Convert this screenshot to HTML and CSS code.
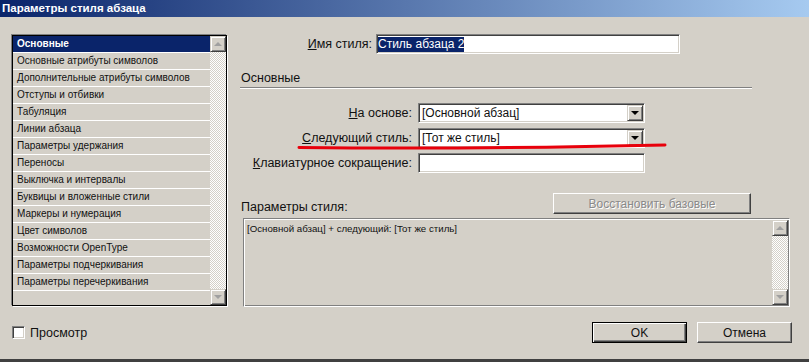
FILE: index.html
```html
<!doctype html>
<html>
  <head>
    <meta charset="utf-8" />
    <meta name="viewport" content="width=device-width, initial-scale=1" />
    <link rel="stylesheet" href="styles.css">
  </head>

  <body>
    <div class="dialog">
      <div class="titlebar">Параметры стиля абзаца</div>

      <div class="main">
        <div class="categories">
          <ul class="category-list">
            <li class="selected">Основные</li>
            <li>Основные атрибуты символов</li>
            <li>Дополнительные атрибуты символов</li>
            <li>Отступы и отбивки</li>
            <li>Табуляция</li>
            <li>Линии абзаца</li>
            <li>Параметры удержания</li>
            <li>Переносы</li>
            <li>Выключка и интервалы</li>
            <li>Буквицы и вложенные стили</li>
            <li>Маркеры и нумерация</li>
            <li>Цвет символов</li>
            <li>Возможности OpenType</li>
            <li>Параметры подчеркивания</li>
            <li>Параметры перечеркивания</li>
          </ul>
          <div class="scrollbar">
            <div class="scroll-btn up"></div>
            <div class="scroll-track"></div>
            <div class="scroll-btn down"></div>
          </div>
        </div>

        <div class="panel">
          <div class="field-row name-row">
            <label class="field-label"><u>И</u>мя стиля:</label>
            <div class="textbox name-box"><span class="selection">Стиль абзаца 2</span></div>
          </div>

          <div class="section-title">Основные</div>

          <div class="fields">
            <div class="field-row">
              <label class="field-label"><u>Н</u>а основе:</label>
              <div class="combo">
                <span>[Основной абзац]</span>
                <span class="combo-btn"></span>
              </div>
            </div>
            <div class="field-row">
              <label class="field-label"><u>С</u>ледующий стиль:</label>
              <div class="combo">
                <span>[Тот же стиль]</span>
                <span class="combo-btn"></span>
              </div>
            </div>
            <div class="field-row">
              <label class="field-label"><u>К</u>лавиатурное сокращение:</label>
              <div class="textbox"></div>
            </div>
          </div>

          <div class="summary-head">
            <span class="summary-label">Параметры стиля:</span>
            <button class="button reset" disabled>Восстановить базовые</button>
          </div>

          <div class="summary">
            <div class="summary-text">[Основной абзац] + следующий: [Тот же стиль]</div>
            <div class="scrollbar">
              <div class="scroll-btn up"></div>
              <div class="scroll-track"></div>
              <div class="scroll-btn down"></div>
            </div>
          </div>
        </div>
      </div>

      <div class="footer">
        <label class="preview"><span class="checkbox"></span>Просмотр</label>
        <button class="button default">OK</button>
        <button class="button">Отмена</button>
      </div>

      <svg class="annotation" width="809" height="362" viewBox="0 0 809 362">
        <path d="M299 147.5 Q470 149.5 665 145" fill="none" stroke="#e8000b" stroke-width="3" stroke-linecap="round" />
      </svg>
    </div>
  </body>
</html>
```

FILE: styles.css
```css
body {
  margin: 0;
}

.dialog {
  background: #d4d0c8;
  border-bottom: 3px solid #404040;
  box-sizing: border-box;
  color: #111;
  display: flex;
  flex-direction: column;
  font-family: "Liberation Sans", Arial, sans-serif;
  height: 362px;
  overflow: hidden;
  position: relative;
  width: 809px;
}

.titlebar {
  background: linear-gradient(to right, #0a246a, #a6caf0);
  color: #fff;
  font-size: 11.5px;
  font-weight: bold;
  height: 17px;
  line-height: 17px;
  padding-left: 2px;
}

.main {
  display: flex;
  gap: 13px;
  padding: 18px 0 0 12px;
}

/* category list */

.categories {
  border: 1px solid #000;
  box-shadow: -1px -1px 0 #808080, 1px 1px 0 #fff;
  box-sizing: border-box;
  display: flex;
  height: 271px;
  width: 215px;
}

.category-list {
  flex: 1;
  font-size: 10px;
  list-style: none;
  margin: 0;
  padding: 0;
}

.category-list li {
  border-bottom: 1px solid #fff;
  height: 16px;
  line-height: 16px;
  padding-left: 4px;
  white-space: nowrap;
}

.category-list li.selected {
  background: #0a246a;
  color: #fff;
  font-weight: bold;
}

.scrollbar {
  display: flex;
  flex-direction: column;
  width: 16px;
}

.scroll-track {
  background: repeating-conic-gradient(#fff 0 25%, #d4d0c8 0 50%) 0 0 / 2px 2px;
  flex: 1;
}

.scroll-btn {
  align-items: center;
  background: #d4d0c8;
  border: 1px solid;
  border-color: #d4d0c8 #404040 #404040 #d4d0c8;
  box-shadow: inset 1px 1px #fff, inset -1px -1px #808080;
  box-sizing: border-box;
  display: flex;
  height: 16px;
  justify-content: center;
}

.scroll-btn::before {
  border-left: 4px solid transparent;
  border-right: 4px solid transparent;
  content: "";
}

.scroll-btn.up::before {
  border-bottom: 4px solid #a0a0a0;
}

.scroll-btn.down::before {
  border-top: 4px solid #a0a0a0;
}

/* right panel */

.panel {
  display: flex;
  flex-direction: column;
  margin-top: -1px;
  width: 551px;
}

.field-row {
  align-items: center;
  display: flex;
  height: 20px;
}

.field-label {
  font-size: 12.5px;
  text-align: right;
  white-space: nowrap;
}

.name-row .field-label {
  margin-right: 4px;
  width: 132px;
}

.fields .field-label {
  margin-right: 6px;
  width: 172px;
}

.textbox,
.combo {
  align-items: center;
  background: #fff;
  border: 1px solid;
  border-color: #808080 #fff #fff #808080;
  box-shadow: inset 1px 1px #404040, inset -1px -1px #d4d0c8;
  box-sizing: border-box;
  display: flex;
  font-size: 12px;
  height: 20px;
  padding: 1px 1px 1px 3px;
  width: 227px;
}

.name-box {
  padding-left: 1px;
  width: 304px;
}

.selection {
  background: #0a246a;
  color: #fff;
  line-height: 15px;
}

.combo-btn {
  align-items: center;
  background: #d4d0c8;
  border: 1px solid;
  border-color: #d4d0c8 #404040 #404040 #d4d0c8;
  box-shadow: inset 1px 1px #fff, inset -1px -1px #808080;
  box-sizing: border-box;
  display: flex;
  height: 16px;
  justify-content: center;
  margin-left: auto;
  width: 16px;
}

.combo-btn::before {
  border-left: 4px solid transparent;
  border-right: 4px solid transparent;
  border-top: 4px solid #000;
  content: "";
}

.section-title {
  border-bottom: 1px solid #808080;
  box-shadow: 0 1px 0 #fff;
  font-size: 12.5px;
  line-height: 14px;
  margin-top: 17px;
  padding: 0 0 2px 1px;
  width: 511px;
}

.fields {
  display: flex;
  flex-direction: column;
  gap: 5px;
  margin-top: 15px;
}

.summary-head {
  align-items: flex-end;
  display: flex;
  height: 21px;
  margin-top: 20px;
}

.summary-label {
  font-size: 12.5px;
  line-height: 14px;
  padding-left: 1px;
}

.button {
  background: #d4d0c8;
  border: 1px solid;
  border-color: #fff #404040 #404040 #fff;
  box-shadow: inset -1px -1px #808080;
  color: #111;
  font-family: inherit;
  font-size: 12px;
  height: 21px;
  padding: 0;
  width: 95px;
}

.button:disabled {
  color: #8a8a8a;
  text-shadow: 1px 1px #fff;
}

.button.default {
  border-color: #000;
  box-shadow: inset 1px 1px #fff, inset -1px -1px #404040, inset -2px -2px #808080;
}

.reset {
  margin-left: auto;
  margin-right: 40px;
  width: 198px;
}

.summary {
  border: 1px solid;
  border-color: #808080 #fff #fff #808080;
  box-shadow: inset 1px 1px #fff, inset -1px -1px #808080;
  box-sizing: border-box;
  display: flex;
  height: 89px;
  margin: 4px 0 0 3px;
  padding: 1px;
  width: 547px;
}

.summary-text {
  flex: 1;
  font-size: 9.7px;
  padding: 3px 2px;
}

/* footer */

.footer {
  align-items: center;
  display: flex;
  gap: 10px;
  padding: 15px 17px 0 12px;
}

.preview {
  align-items: center;
  display: flex;
  font-size: 12.5px;
  gap: 5px;
  margin-right: auto;
}

.checkbox {
  background: #fff;
  border: 1px solid;
  border-color: #808080 #fff #fff #808080;
  box-shadow: inset 1px 1px #404040, inset -1px -1px #d4d0c8;
  box-sizing: border-box;
  height: 13px;
  width: 13px;
}

.annotation {
  left: 0;
  pointer-events: none;
  position: absolute;
  top: 0;
}
```
